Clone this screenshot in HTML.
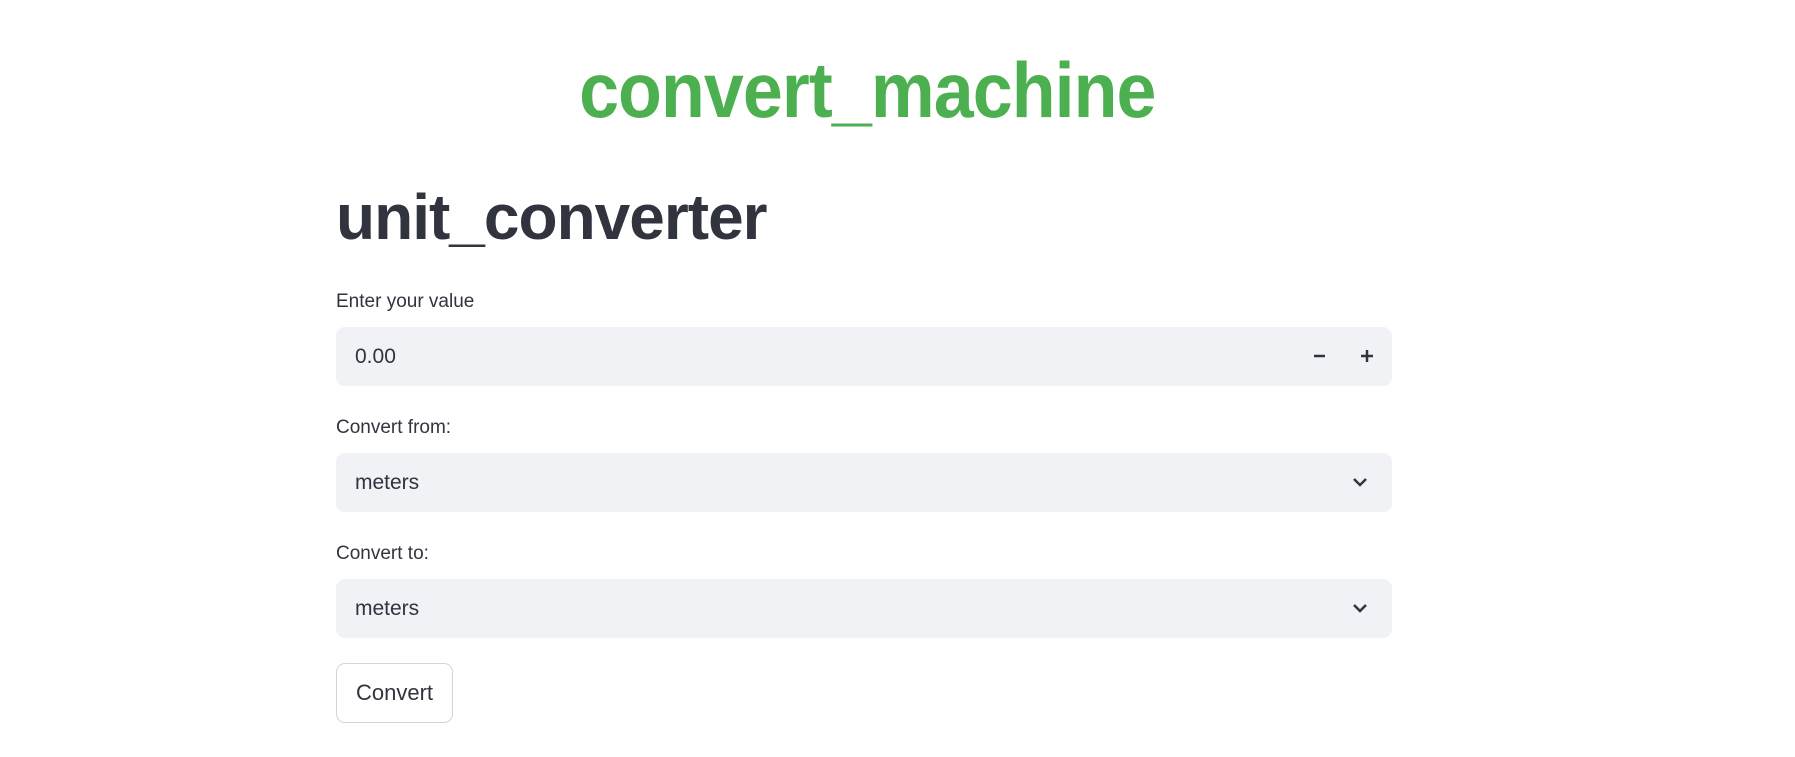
<!DOCTYPE html>
<html><head><meta charset="utf-8"><style>
body{margin:0;width:1795px;height:757px;background:#fff;font-family:"Liberation Sans",sans-serif;color:#31333f;position:relative;overflow:hidden}
.a{position:absolute}
.t{left:0;width:1734px;text-align:center;top:50px;font-size:78px;font-weight:bold;color:#4caf50;line-height:80px}
.t span{display:inline-block;transform:scaleX(0.92);letter-spacing:-1px}
.h{left:336px;top:182px;font-size:64px;font-weight:bold;line-height:70px;letter-spacing:-1px}
.l{left:336px;font-size:19px}
.b{left:336px;width:1056px;height:59px;background:#f0f2f6;border-radius:9px}
.v{position:absolute;left:19px;top:0;line-height:59px;font-size:21px}
.btn{left:336px;top:663px;width:115px;height:58px;border:1px solid #d3d5db;border-radius:9px;font-size:22px;line-height:58px;text-align:center}
</style></head><body>
<div class="a t"><span>convert_machine</span></div>
<div class="a h">unit_converter</div>
<div class="a l" style="top:291px">Enter your value</div>
<div class="a b" style="top:327px"><div class="v">0.00</div>
<svg class="a" style="left:977px;top:22px" width="14" height="14"><path d="M1 7h11" stroke="#31333f" stroke-width="2.5"/></svg>
<svg class="a" style="left:1024px;top:22px" width="14" height="14"><path d="M1 7h12M7 1v12" stroke="#31333f" stroke-width="2.5"/></svg></div>
<div class="a l" style="top:417px">Convert from:</div>
<div class="a b" style="top:453px"><div class="v">meters</div>
<svg class="a" style="left:1016px;top:22px" width="16" height="14"><path d="M2 4l6 6 6-6" fill="none" stroke="#31333f" stroke-width="2.5"/></svg></div>
<div class="a l" style="top:543px">Convert to:</div>
<div class="a b" style="top:579px"><div class="v">meters</div>
<svg class="a" style="left:1016px;top:22px" width="16" height="14"><path d="M2 4l6 6 6-6" fill="none" stroke="#31333f" stroke-width="2.5"/></svg></div>
<div class="a btn">Convert</div>
</body></html>
